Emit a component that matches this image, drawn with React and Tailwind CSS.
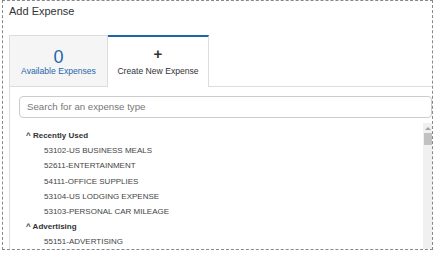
import React from "react";

const recent = [
  "53102-US BUSINESS MEALS",
  "52611-ENTERTAINMENT",
  "54111-OFFICE SUPPLIES",
  "53104-US LODGING EXPENSE",
  "53103-PERSONAL CAR MILEAGE",
];

const advertising = ["55151-ADVERTISING"];

function Group({ title, items }) {
  return (
    <div>
      <div className="pl-[7px] text-[8px] font-bold text-[#333] leading-[15.2px]">
        ^ {title}
      </div>
      {items.map((it) => (
        <div key={it} className="pl-[25px] text-[8px] text-[#444] leading-[15.2px] whitespace-nowrap">
          {it}
        </div>
      ))}
    </div>
  );
}

export default function App() {
  return (
    <div className="w-[440px] h-[253px] bg-white font-['Liberation_Sans',Arial,sans-serif]">
      <div className="ml-[2px] w-[431px] h-[250px] border border-dashed border-[#888] overflow-hidden flex flex-col">
        {/* title */}
        <div className="pl-[6px] pt-[3px] text-[11px] leading-[14px] text-[#333]">Add Expense</div>

        {/* tabs */}
        <div className="mt-[17px] pl-[6px] flex">
          <div className="w-[99px] h-[52px] shrink-0 border border-[#ddd] bg-[#f5f5f5] flex flex-col items-center justify-end pb-[10px]">
            <div className="text-[18px] leading-[18px] text-[#1f66ae]">0</div>
            <div className="text-[8.6px] leading-[10px] text-[#1f66ae] whitespace-nowrap">Available Expenses</div>
          </div>
          <div className="w-[101px] h-[52px] shrink-0 border-t-2 border-t-[#1f65a8] border-r border-r-[#ddd] bg-white flex flex-col items-center justify-end pb-[11px]">
            <div className="text-[15px] leading-[16px] font-bold text-[#333]">+</div>
            <div className="mt-[4px] text-[8.6px] leading-[10px] text-[#333] whitespace-nowrap">Create New Expense</div>
          </div>
          <div className="flex-1 h-[52px] border-b border-[#ddd]" />
        </div>

        {/* panel */}
        <div className="ml-[6px] flex-1 border-l border-[#ddd] pl-[9px] pt-[9px] flex flex-col min-h-0">
          <div className="w-[413px] h-[22px] shrink-0 rounded-[4px] border border-[#ccc] flex items-center pl-[7px] text-[9.7px] text-[#777]">
            Search for an expense type
          </div>
          <div className="mt-[5px] w-[413px] flex-1 flex min-h-0">
            <div className="flex-1 pt-[5px] overflow-hidden">
              <Group title="Recently Used" items={recent} />
              <Group title="Advertising" items={advertising} />
            </div>
            <div className="w-[9px] bg-[#f0f0f0] flex flex-col items-center">
              <div className="mt-[4px] w-0 h-0 border-l-[3px] border-r-[3px] border-b-[3px] border-l-transparent border-r-transparent border-b-[#a3a3a3]" />
              <div className="mt-[3px] w-[8px] h-[12px] bg-[#c1c1c1]" />
            </div>
          </div>
        </div>
      </div>
    </div>
  );
}
